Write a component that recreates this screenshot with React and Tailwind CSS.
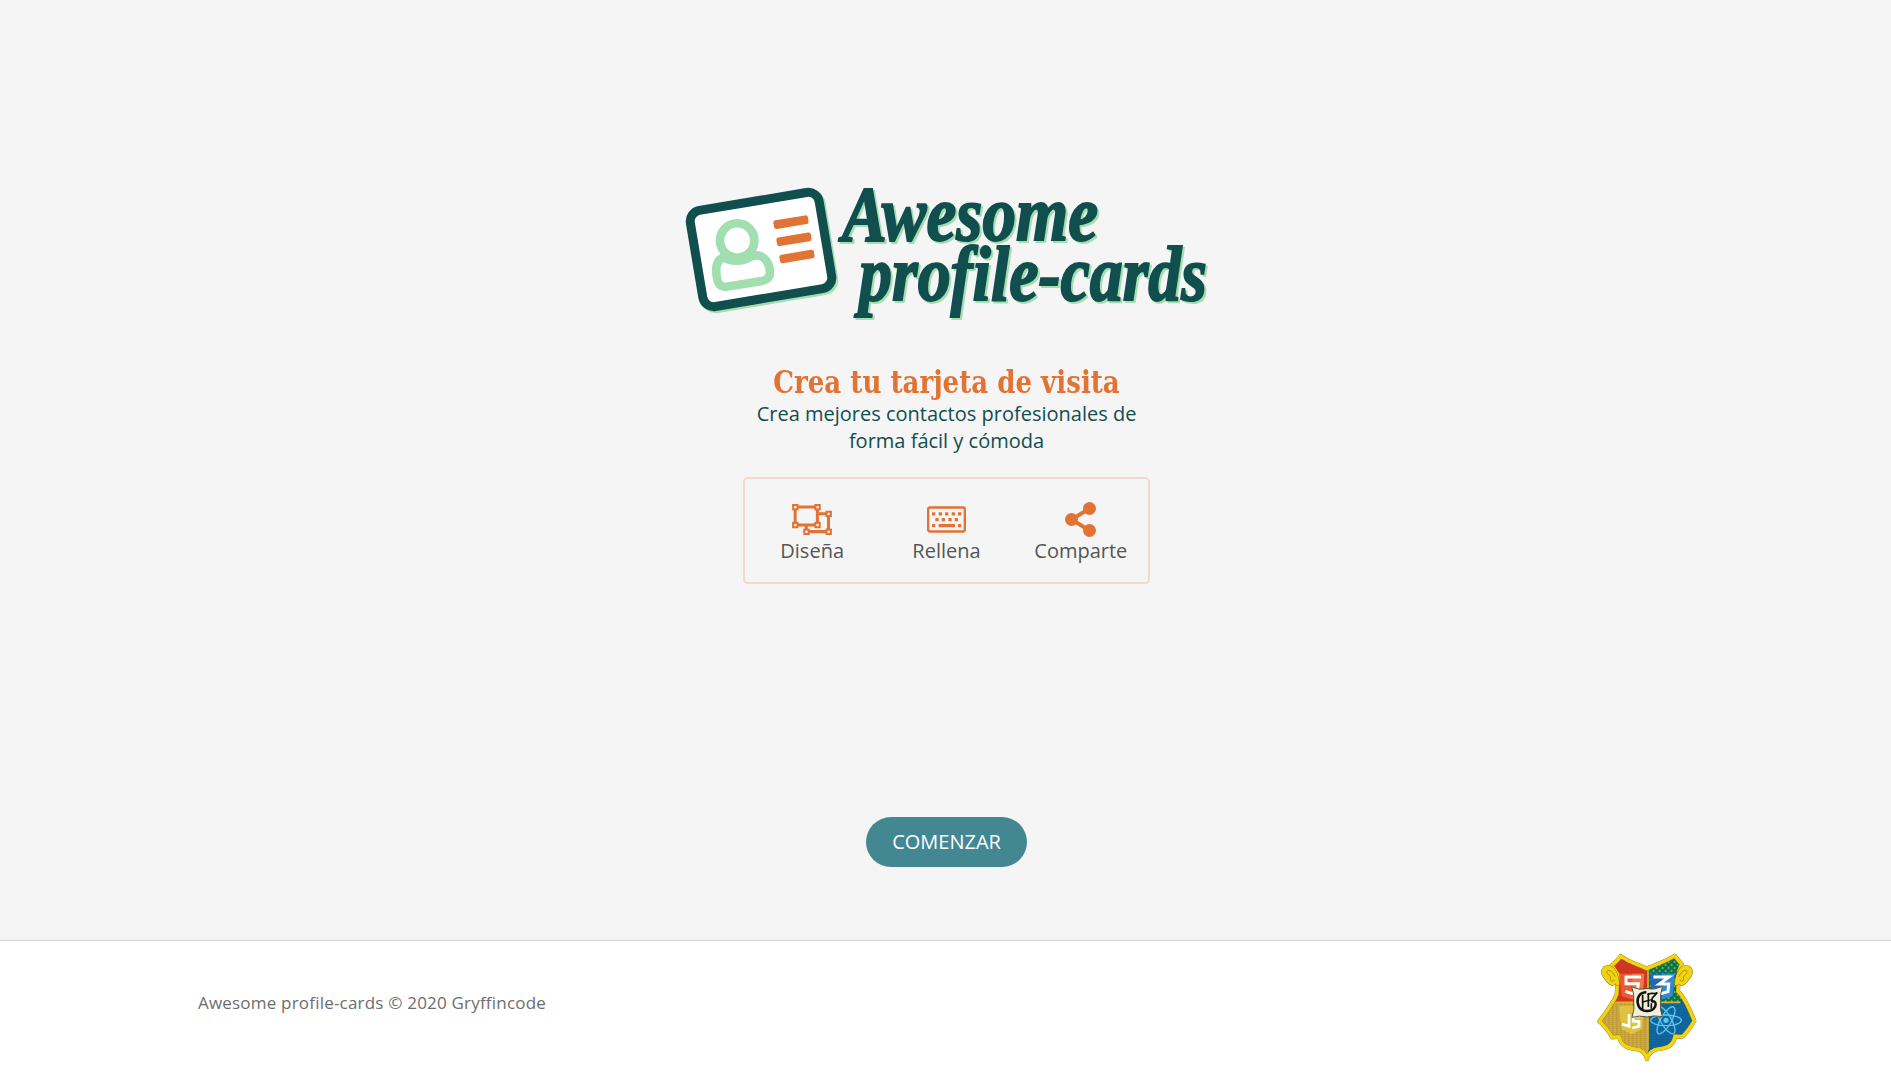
function Logo() {
  return (
    <svg viewBox="0 0 524 140" className="h-[140px] w-[524px] overflow-visible">
      <g className="[filter:drop-shadow(2px_2px_0_#a2dfb0)]">
        <rect x="-65.300" y="-48.700" width="130.600" height="97.400" rx="11" transform="translate(76 64.500) rotate(-9.500)" fill="#fff" stroke="#114e4e" strokeWidth="9" />
        <g fill="#114e4e" stroke="#114e4e" strokeWidth="2" className="font-['Liberation_Serif'] text-[79px] font-bold italic">
          <text x="157" y="54.500" textLength="256" lengthAdjust="spacingAndGlyphs">Awesome</text>
          <text x="174" y="115" textLength="348" lengthAdjust="spacingAndGlyphs">profile-cards</text>
        </g>
      </g>
      <g fill="none" stroke="#a2dfb0" strokeWidth="8.6">
        <circle cx="52.200" cy="55.500" r="17.200" />
        <path d="M39 72C31 75 30 83 32 93C33 100 36 102.500 43 101.500L77 96C84 94.500 86 90 84.500 83C82 72 74 69 67 71C61 76 47 78 39 72Z" strokeLinejoin="round" />
      </g>
      <g fill="#e17334">
        <rect x="-17.500" y="-4.400" width="35" height="8.800" rx="2.500" transform="translate(106 37.200) rotate(-9.500)" />
        <rect x="-17.500" y="-4.400" width="35" height="8.800" rx="2.500" transform="translate(109 54.300) rotate(-9.500)" />
        <rect x="-17.500" y="-4.400" width="35" height="8.800" rx="2.500" transform="translate(112 71.500) rotate(-9.500)" />
      </g>
    </svg>
  );
}

function DesignIcon() {
  const handles = [[3, 3], [69, 3], [3, 56], [69, 56], [102, 23], [36, 76], [102, 76]];
  return (
    <svg viewBox="0 0 118 92" className="h-[31px] w-10" fill="none" stroke="currentColor">
      <path d="M9 9H75V62H9ZM75 29H108V82H42V62" strokeWidth="9" />
      {handles.map(([x, y]) => (
        <rect key={`${x}-${y}`} x={x} y={y} width="13" height="13" fill="#f5f5f5" strokeWidth="6" />
      ))}
    </svg>
  );
}

function KeyboardIcon() {
  const keys = [[15, 18], [35, 18], [54, 18], [74, 18], [93, 18], [25, 35], [44, 35], [64, 35], [83, 35], [15, 53], [93, 53]];
  return (
    <svg viewBox="0 0 117 93" className="h-[31px] w-[39px]" fill="currentColor">
      <g transform="translate(0 7)">
        <rect x="3.500" y="3.500" width="110" height="72" rx="6" fill="none" stroke="currentColor" strokeWidth="7" />
        {keys.map(([x, y]) => (
          <rect key={`${x}-${y}`} x={x} y={y} width="10" height="9.500" rx="1" />
        ))}
        <rect x="35" y="53" width="49" height="9.500" rx="1" />
      </g>
    </svg>
  );
}

function ShareIcon() {
  return (
    <svg viewBox="0 0 31 35" className="h-[35px] w-[31px]" fill="currentColor">
      <path d="M24.500 6.500 6.500 17.500 24.500 28.500" fill="none" stroke="currentColor" strokeWidth="4" />
      <circle cx="24.500" cy="6.500" r="6.500" />
      <circle cx="6.500" cy="17.500" r="6.500" />
      <circle cx="24.500" cy="28.500" r="6.500" />
    </svg>
  );
}

function Crest() {
  const outline = "M121 67 C140 83 176 94 199 105 C222 94 258 83 283 66 C289 76 294 80 304 91 L296 112 L293 174 C310 187 330 232 342 262 C326 288 319 298 306 309 L284 308 C281 331 263 344 236 346 C216 348 204 360 200 376 C196 360 184 348 164 346 C139 344 121 332 116 309 L96 311 C84 291 72 275 57 263 C78 236 96 213 109 183 L113 123 L94 95 C104 87 114 79 121 67Z";
  const scroll = "M112 150C108 124 99 102 84 101C66 101 66 120 76 130C84 145 99 157 103 144C104 133 92 131 91 141";
  return (
    <svg viewBox="50 55 300 327" className="h-[109px] w-[100px]">
      <defs>
        <clipPath id="shield"><path d={outline} /></clipPath>
        <pattern id="red-grid" width="7" height="7" patternUnits="userSpaceOnUse">
          <rect width="7" height="7" fill="#dc3925" /><path d="M0 0 7 7M7 0 0 7" stroke="#b52c20" strokeWidth="1.200" />
        </pattern>
        <pattern id="green-dots" width="18" height="18" patternUnits="userSpaceOnUse">
          <rect width="18" height="18" fill="#08733f" /><circle cx="4" cy="4" r="2.400" fill="#d5e5cd" /><circle cx="13" cy="13" r="2.400" fill="#d5e5cd" />
        </pattern>
        <pattern id="gold-grid" width="12" height="12" patternUnits="userSpaceOnUse">
          <rect width="12" height="12" fill="#d6b341" /><path d="M0 1H12M1 0V12M0 7H12" stroke="#94772a" strokeWidth="1.200" />
        </pattern>
        <pattern id="blue-lines" width="9" height="9" patternUnits="userSpaceOnUse">
          <rect width="9" height="9" fill="#11679f" /><path d="M0 1H9" stroke="#0b517f" strokeWidth="1.500" />
        </pattern>
      </defs>
      <g clipPath="url(#shield)">
        <path d="M50 55H203V205H50Z" fill="url(#red-grid)" />
        <path d="M203 55H350V205H203Z" fill="url(#green-dots)" />
        <path d="M50 205H203V382H50Z" fill="url(#gold-grid)" />
        <path d="M203 205H350V382H203Z" fill="url(#blue-lines)" />
        <path d="M203 90V350M105 206H300" stroke="#d9b727" strokeWidth="5" />
      </g>
      <path d={outline} fill="none" stroke="#8b7526" strokeWidth="12.500" strokeLinejoin="round" />
      <path d={outline} fill="none" stroke="#f3d30f" strokeWidth="10.500" strokeLinejoin="round" />
      {["translate(0 0)", "translate(400 0) scale(-1 1)"].map((t) => (
        <g key={t} transform={t} fill="none" strokeLinecap="round">
          <path d={scroll} fill="#f3d30f" stroke="#766321" strokeWidth="13" />
          <path d={scroll} fill="#f3d30f" stroke="#f3d30f" strokeWidth="10.500" />
          <path d="M104 128C96 113 87 106 80 113C78 124 92 121 90 134C90 145 102 146 101 138" stroke="#8b7419" strokeWidth="2" />
        </g>
      ))}
      <path d="M117 120H192L187 185L154 197L124 188Z" fill="#ed5a31" />
      <path d="M156 120H192L187 185L156 196Z" fill="#f47549" />
      <path d="M182 130H137V150H174L171 174L154 179L135 173" fill="none" stroke="#fff" strokeWidth="9" />
      <path d="M208 120H283L277 187L244 198L214 188Z" fill="#2367b8" />
      <path d="M245 120H283L277 187L245 197Z" fill="#3589d3" />
      <path d="M219 130H266L237 151H265L263 174L244 179L223 172" fill="none" stroke="#fff" strokeWidth="9" />
      <path d="M116 216H191L185 286L154 302L123 286Z" fill="#dfc23f" />
      <path d="M146 241V278L125 271M179 247H159V263H176V278L156 283" fill="none" stroke="#fff" strokeWidth="8" />
      <g fill="none" stroke="#5bc7ed" strokeWidth="4">
        <ellipse cx="257" cy="260" rx="46" ry="16" />
        <ellipse cx="257" cy="260" rx="46" ry="16" transform="rotate(60 257 260)" />
        <ellipse cx="257" cy="260" rx="46" ry="16" transform="rotate(120 257 260)" />
        <circle cx="257" cy="260" r="6" fill="#5bc7ed" />
      </g>
      <path d="M154 159Q176 171 198 165Q223 170 247 158Q238 182 241 205Q238 229 246 249Q220 244 200 250Q179 244 155 251Q164 226 160 205Q163 181 154 159Z" fill="#f2efd9" stroke="#5b513e" strokeWidth="3" />
      <g fill="none" stroke="#111">
        <path d="M198 176C178 176 170 191 172 207C174 224 187 234 203 232C217 231 226 223 226 212C226 203 220 201 213 205" strokeWidth="7.500" />
        <path d="M187 183V226M204 178V220" strokeWidth="5" />
        <path d="M187 205L214 198" strokeWidth="4" />
        <path d="M202 184C211 173 219 184 231 177L216 193L214 205M213 209V225" strokeWidth="5" />
      </g>
    </svg>
  );
}

const steps = [
  { label: "Diseña", Icon: DesignIcon },
  { label: "Rellena", Icon: KeyboardIcon },
  { label: "Comparte", Icon: ShareIcon },
];

export default function App() {
  return (
    <div className="flex h-[1075px] flex-col bg-[#f5f5f5] font-['Open_Sans',sans-serif]">
      <main className="flex h-[940px] flex-col items-center pt-[185px] pl-0.5">
        <Logo />
        <h1 className="mt-[38px] h-[37px] origin-[50%_80%] scale-y-108 whitespace-nowrap font-['DejaVu_Serif_Condensed','DejaVu_Serif',serif] text-[29px] leading-10 font-bold text-[#e17334]">
          Crea tu tarjeta de visita
        </h1>
        <p className="w-[407px] text-center text-xl leading-[27px] text-[#114e4e]">
          Crea mejores contactos profesionales de
          <br />
          forma fácil y cómoda
        </p>
        <ul className="mt-[23px] grid h-[107px] w-[407px] grid-cols-3 rounded-[5px] border-2 border-[#f3d9c9] pt-[22px]">
          {steps.map(({ label, Icon }) => (
            <li key={label} className="flex flex-col items-center text-[#e17334]">
              <div className="flex h-9 items-center">
                <Icon />
              </div>
              <span className="text-xl leading-[27px] text-[#555]">{label}</span>
            </li>
          ))}
        </ul>
        <button className="mt-[233px] h-[50px] w-[161px] rounded-full bg-[#438792] text-xl text-white">COMENZAR</button>
      </main>
      <footer className="flex h-[135px] items-center justify-between border-t border-[#d5d5d5] bg-white pr-[194px] pl-[198px]">
        <p className="pb-[11px] text-[17px] tracking-[0.2px] text-[#6d6d6d]">Awesome profile-cards © 2020 Gryffincode</p>
        <div className="pb-1">
          <Crest />
        </div>
      </footer>
    </div>
  );
}
